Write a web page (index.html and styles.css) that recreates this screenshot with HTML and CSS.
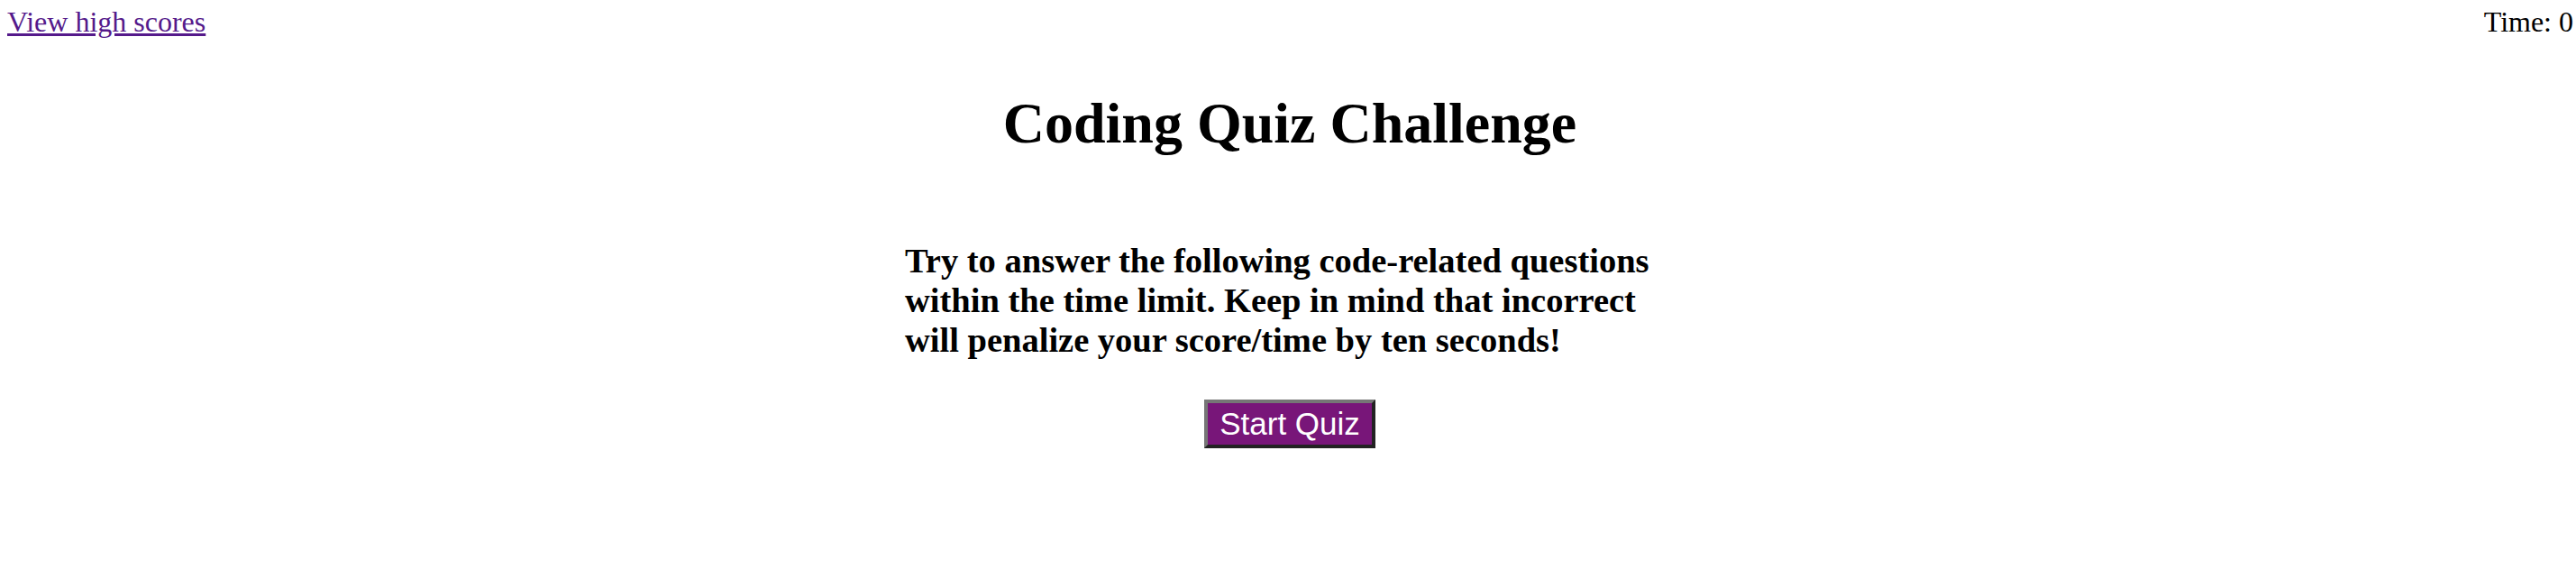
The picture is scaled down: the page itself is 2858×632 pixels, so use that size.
FILE: index.html
```html
<!DOCTYPE html>
<html lang="en">
<head>
<meta charset="utf-8">
<title>Coding Quiz Challenge</title>
<link rel="stylesheet" href="styles.css">
</head>
<body>
<header class="top-bar">
  <a class="scores-link" href="#">View high scores</a>
  <div class="timer">Time: 0</div>
</header>
<main class="quiz">
  <h1 class="title">Coding Quiz Challenge</h1>
  <h3 class="intro">Try to answer the following code-related questions within the time limit. Keep in mind that incorrect will penalize your score/time by ten seconds!</h3>
  <div class="actions">
    <button class="start-btn" type="button">Start Quiz</button>
  </div>
</main>
</body>
</html>
```

FILE: styles.css
```css
html, body {
  margin: 0;
  padding: 0;
  background: #ffffff;
}

body {
  font-family: "Liberation Serif", "Times New Roman", serif;
  color: #000000;
}

.top-bar {
  display: flex;
  justify-content: space-between;
  align-items: baseline;
  padding: 6px 3px 0 8px;
  font-size: 32px;
}

.scores-link {
  color: #551a8b;
  text-decoration: underline;
}

.timer {
  color: #000000;
}

.quiz {
  display: flex;
  flex-direction: column;
  align-items: center;
}

.title {
  font-size: 64px;
  font-weight: bold;
  margin: 57px 0 0 4px;
  text-align: center;
}

.intro {
  width: 850px;
  font-size: 38.5px;
  font-weight: bold;
  margin: 93px 0 0 0;
}

.actions {
  margin-top: 44px;
  display: flex;
  justify-content: center;
}

.start-btn {
  font-family: "Liberation Sans", Arial, sans-serif;
  font-size: 35px;
  color: #ffffff;
  background: #781679;
  border-width: 4px;
  border-style: solid;
  border-color: #767676 #222222 #222222 #767676;
  padding: 3px 13px;
  margin: 0 0 0 4px;
  cursor: pointer;
}
```
